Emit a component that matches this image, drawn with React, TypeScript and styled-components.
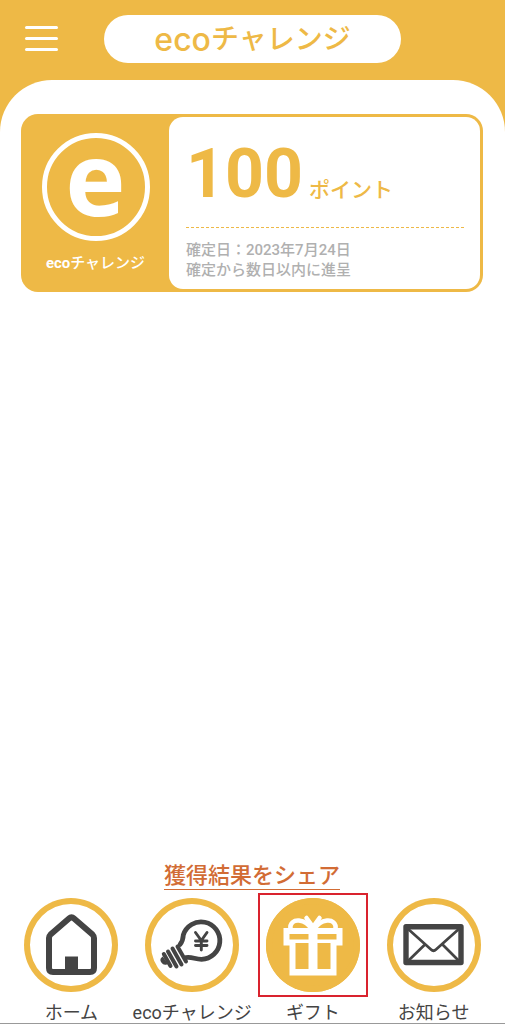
import React from 'react';
import styled, { createGlobalStyle } from 'styled-components';

const amber = '#eeb946';
const ink = '#444444';

const GlobalStyle = createGlobalStyle`
  *, *::before, *::after { box-sizing: border-box; }
  body {
    margin: 0;
    background: ${amber};
    font-family: Roboto, 'Noto Sans CJK JP', sans-serif;
  }
  h1, p { margin: 0; }
`;

const Page = styled.div`
  min-height: 100vh;
  display: flex;
  flex-direction: column;
  border-bottom: 1px solid #999999;
`;

const Header = styled.header`
  height: 80px;
  flex: none;
  display: grid;
  grid-template-columns: 104px 1fr 104px;
  align-items: center;
  padding-bottom: 3px;
`;

const MenuButton = styled.button`
  width: 33px;
  height: 25px;
  margin-left: 25px;
  padding: 0;
  border: 0;
  background: none;
  display: flex;
  flex-direction: column;
  justify-content: space-between;
`;

const MenuBar = styled.span`
  height: 3px;
  border-radius: 2px;
  background: #ffffff;
`;

const Title = styled.h1`
  height: 48px;
  padding-top: 2px;
  border-radius: 24px;
  background: #ffffff;
  color: ${amber};
  display: flex;
  align-items: center;
  justify-content: center;
  font-size: 28px;
  font-weight: 500;
  line-height: 46px;
`;

const TitleLatin = styled.span`
  font-family: Inter, sans-serif;
  font-size: 32px;
  font-weight: 500;
`;

const Main = styled.main`
  flex: 1;
  display: flex;
  flex-direction: column;
  justify-content: space-between;
  padding: 34px 22px 0 21px;
  border-radius: 52px 52px 0 0;
  background: #ffffff;
`;

const Card = styled.article`
  display: grid;
  grid-template-columns: 145px 1fr;
  padding: 3px;
  border-radius: 17px;
  background: ${amber};
`;

const Brand = styled.div`
  display: flex;
  flex-direction: column;
  align-items: center;
  gap: 11px;
  padding: 16px 2px 0 0;
  color: #ffffff;
`;

const BrandMark = styled.div`
  width: 108px;
  height: 108px;
  border: 5px solid #ffffff;
  border-radius: 50%;
  display: flex;
  justify-content: center;
  font: 700 102px/78px 'Open Sans', sans-serif;
`;

const BrandName = styled.p`
  font-size: 15px;
  font-weight: 500;
  line-height: 22px;

  b { font-weight: 700; }
`;

const Details = styled.div`
  min-height: 172px;
  padding: 16px 16px 8px 17px;
  border-radius: 14px;
  background: #ffffff;
`;

const Points = styled.p`
  display: flex;
  align-items: baseline;
  gap: 6px;
  height: 95px;
  border-bottom: 1px dashed ${amber};
  color: ${amber};
  font-size: 68px;
  font-weight: 700;
  line-height: 82px;
`;

const Unit = styled.span`
  font-size: 21px;
  font-weight: 500;
  line-height: 22px;
`;

const Note = styled.p`
  padding-top: 12px;
  color: #b0b0b0;
  font-size: 15px;
  font-weight: 500;
  line-height: 20px;
`;

const ShareLink = styled.a`
  align-self: center;
  padding-top: 2px;
  border-bottom: 1px solid #d26c35;
  color: #d26c35;
  font-size: 22px;
  font-weight: 500;
  line-height: 26px;
  text-decoration: none;
`;

const Nav = styled.nav`
  display: grid;
  grid-template-columns: repeat(4, 1fr);
  padding: 8px 11px 0;
  background: #ffffff;
`;

const NavItem = styled.a`
  display: flex;
  flex-direction: column;
  align-items: center;
  gap: 11px;
  color: ${ink};
  font-size: 18px;
  line-height: 20px;
  text-decoration: none;
  white-space: nowrap;
`;

const NavCircle = styled.span<{ $active?: boolean }>`
  position: relative;
  display: block;
  width: 94px;
  height: 94px;
  border-radius: 50%;
  background: ${(p) => (p.$active ? amber : '#ffffff')};
  box-shadow: inset 0 0 0 6px ${amber};

  &::after {
    content: '';
    display: ${(p) => (p.$active ? 'block' : 'none')};
    position: absolute;
    inset: -5px -8px;
    border: 2px solid #d9232e;
  }

  svg { display: block; }
`;

const HomeIcon = () => (
  <svg width="94" height="94" viewBox="0 0 94 94" fill="none" aria-hidden="true">
    <path d="M45 20.500 26.500 36.500Q25 38 25 40V70Q25 74 29 74H66Q70 74 70 70V40Q70 38 68.500 36.500L50 20.500Q47.500 18.200 45 20.500Z" stroke={ink} strokeWidth="6" strokeLinejoin="round" />
    <path d="M41 58.500H54V76H41Z" fill={ink} />
  </svg>
);

const BulbIcon = () => (
  <svg width="94" height="94" viewBox="0 0 94 94" fill="none" stroke={ink} strokeLinecap="round" aria-hidden="true">
    <path d="M35 46.500Q38 43 38.300 37A18.700 18.700 0 1 1 56.500 61.300C50 61.300 47 58.500 41 59.500" strokeWidth="4.800" />
    <path d="M32.500 48.500 41 63.500M27.500 50.500 36.500 66.500M23 53.500 31.500 68.500M18.800 56 25.500 68" strokeWidth="4" />
    <path d="M17.500 60Q15.500 61.500 17.200 64T21.500 65.500Z" fill={ink} strokeWidth="2" />
    <path d="M50.500 34.500 56.300 42.500 62 34.500M56.300 42.500V52M50.500 43H62M50.500 47.500H62" strokeWidth="2.900" />
  </svg>
);

const GiftIcon = () => (
  <svg width="94" height="94" viewBox="0 0 94 94" fill="none" aria-hidden="true">
    <path d="M17.500 30H76.500V47.500H70.500V77.500H23.500V47.500H17.500Z" fill="#ffffff" />
    <path d="M23.500 36H42.500V41.500H23.500ZM51.500 36H70.500V41.500H51.500ZM29.500 45H42.500V71H29.500ZM51.500 45H64.500V71H51.500Z" fill={amber} />
    <path d="M28 29Q33 25.500 38 28L41 30H27ZM66 29Q61 25.500 56 28L53 30H67Z" fill={amber} />
    <path d="M24.500 31C23.500 25 28 22 33 22.500C39 23 42 26 46 31M69.500 31C70.500 25 66 22 61 22.500C55 23 52 26 48 31" stroke="#ffffff" strokeWidth="4.500" />
    <path d="M40.500 20 47 29 53.500 20" stroke="#ffffff" strokeWidth="4.500" strokeLinecap="round" strokeLinejoin="round" />
  </svg>
);

const MailIcon = () => (
  <svg width="94" height="94" viewBox="0 0 94 94" fill="none" stroke={ink} aria-hidden="true">
    <path d="M19 28.700H74V64.500H19Z" strokeWidth="5.400" strokeLinejoin="round" />
    <path d="M20 30 44 51.500Q46.500 54 49 51.500L73 30M20 64 38.500 46M73 64 55 46" strokeWidth="2.700" />
  </svg>
);

const items = [
  { label: 'ホーム', href: '#home', icon: <HomeIcon /> },
  { label: 'ecoチャレンジ', href: '#challenge', icon: <BulbIcon /> },
  { label: 'ギフト', href: '#gift', icon: <GiftIcon />, active: true },
  { label: 'お知らせ', href: '#news', icon: <MailIcon /> },
];

export default function App() {
  return (
    <Page lang="ja">
      <GlobalStyle />
      <Header>
        <MenuButton type="button" aria-label="メニュー">
          <MenuBar />
          <MenuBar />
          <MenuBar />
        </MenuButton>
        <Title>
          <TitleLatin>eco</TitleLatin>チャレンジ
        </Title>
      </Header>
      <Main>
        <Card>
          <Brand>
            <BrandMark>e</BrandMark>
            <BrandName>
              <b>eco</b>チャレンジ
            </BrandName>
          </Brand>
          <Details>
            <Points>
              100<Unit>ポイント</Unit>
            </Points>
            <Note>
              確定日：2023年7月24日
              <br />
              確定から数日以内に進呈
            </Note>
          </Details>
        </Card>
        <ShareLink href="#share">獲得結果をシェア</ShareLink>
      </Main>
      <Nav>
        {items.map((item) => (
          <NavItem key={item.label} href={item.href} aria-current={item.active ? 'page' : undefined}>
            <NavCircle $active={item.active}>{item.icon}</NavCircle>
            {item.label}
          </NavItem>
        ))}
      </Nav>
    </Page>
  );
}
